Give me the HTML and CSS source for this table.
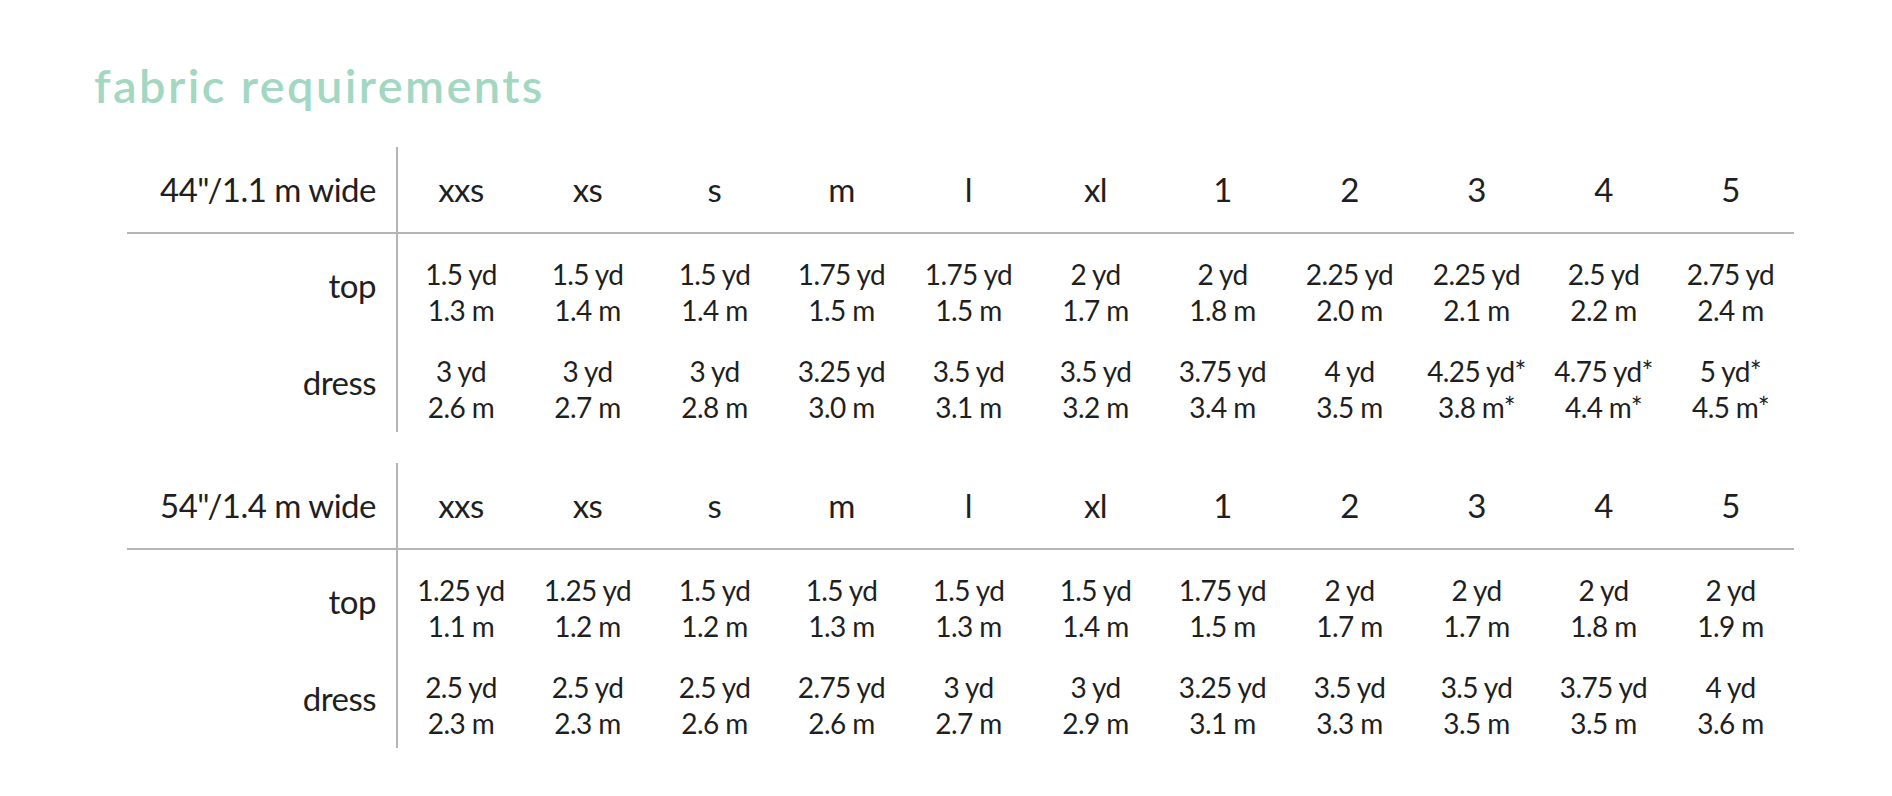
FILE: index.html
```html
<!DOCTYPE html>
<html lang="en">
<head>
<meta charset="utf-8">
<title>fabric requirements</title>
<link rel="stylesheet" href="styles.css">
</head>
<body>
<main class="page">
  <h1 class="title">fabric requirements</h1>

  <table class="req">
    <colgroup><col class="c-label"><col span="11" class="c-size"></colgroup>
    <thead>
      <tr><th class="label">44"/1.1 m wide</th><th>xxs</th><th>xs</th><th>s</th><th>m</th><th>l</th><th>xl</th><th>1</th><th>2</th><th>3</th><th>4</th><th>5</th></tr>
    </thead>
    <tbody>
      <tr><th class="label">top</th>
        <td>1.5 yd<br>1.3 m</td><td>1.5 yd<br>1.4 m</td><td>1.5 yd<br>1.4 m</td><td>1.75 yd<br>1.5 m</td><td>1.75 yd<br>1.5 m</td><td>2 yd<br>1.7 m</td><td>2 yd<br>1.8 m</td><td>2.25 yd<br>2.0 m</td><td>2.25 yd<br>2.1 m</td><td>2.5 yd<br>2.2 m</td><td>2.75 yd<br>2.4 m</td></tr>
      <tr><th class="label">dress</th>
        <td>3 yd<br>2.6 m</td><td>3 yd<br>2.7 m</td><td>3 yd<br>2.8 m</td><td>3.25 yd<br>3.0 m</td><td>3.5 yd<br>3.1 m</td><td>3.5 yd<br>3.2 m</td><td>3.75 yd<br>3.4 m</td><td>4 yd<br>3.5 m</td><td>4.25 yd*<br>3.8 m*</td><td>4.75 yd*<br>4.4 m*</td><td>5 yd*<br>4.5 m*</td></tr>
    </tbody>
  </table>

  <table class="req">
    <colgroup><col class="c-label"><col span="11" class="c-size"></colgroup>
    <thead>
      <tr><th class="label">54"/1.4 m wide</th><th>xxs</th><th>xs</th><th>s</th><th>m</th><th>l</th><th>xl</th><th>1</th><th>2</th><th>3</th><th>4</th><th>5</th></tr>
    </thead>
    <tbody>
      <tr><th class="label">top</th>
        <td>1.25 yd<br>1.1 m</td><td>1.25 yd<br>1.2 m</td><td>1.5 yd<br>1.2 m</td><td>1.5 yd<br>1.3 m</td><td>1.5 yd<br>1.3 m</td><td>1.5 yd<br>1.4 m</td><td>1.75 yd<br>1.5 m</td><td>2 yd<br>1.7 m</td><td>2 yd<br>1.7 m</td><td>2 yd<br>1.8 m</td><td>2 yd<br>1.9 m</td></tr>
      <tr><th class="label">dress</th>
        <td>2.5 yd<br>2.3 m</td><td>2.5 yd<br>2.3 m</td><td>2.5 yd<br>2.6 m</td><td>2.75 yd<br>2.6 m</td><td>3 yd<br>2.7 m</td><td>3 yd<br>2.9 m</td><td>3.25 yd<br>3.1 m</td><td>3.5 yd<br>3.3 m</td><td>3.5 yd<br>3.5 m</td><td>3.75 yd<br>3.5 m</td><td>4 yd<br>3.6 m</td></tr>
    </tbody>
  </table>
</main>
</body>
</html>
```

FILE: styles.css
```css
html, body {
  margin: 0;
  padding: 0;
  background: #ffffff;
}

body {
  font-family: "Lato", "Liberation Sans", sans-serif;
  color: #1f1f1f;
}

.page {
  padding: 62px 0 0 0;
}

.title {
  margin: 0 0 39px 94px;
  font-size: 47px;
  line-height: 46px;
  font-weight: 600;
  color: #a2d7c2;
  letter-spacing: 2.4px;
}

.req {
  border-collapse: collapse;
  table-layout: fixed;
  width: 1667px;
  margin: 0 0 31px 127px;
}

.c-label { width: 270px; }
.c-size { width: 127px; }

.req th,
.req td {
  padding: 0;
  text-align: center;
  vertical-align: top;
  font-weight: 400;
}

.req thead th {
  font-size: 33px;
  line-height: 36px;
  letter-spacing: -0.5px;
  padding: 24px 0 25px;
  border-bottom: 2px solid #b5b5b5;
}

.req td {
  font-size: 28px;
  line-height: 36px;
  letter-spacing: -0.6px;
  padding: 22px 0 5px;
}

.req tbody tr + tr td {
  padding-top: 20px;
  padding-bottom: 7px;
}

.req .label {
  text-align: right;
  padding-right: 20px;
  border-right: 2px solid #b5b5b5;
}

.req tbody .label {
  font-size: 33px;
  line-height: 36px;
  letter-spacing: -0.5px;
  padding-top: 33px;
}

.req tbody tr + tr .label {
  padding-top: 31px;
}
```
